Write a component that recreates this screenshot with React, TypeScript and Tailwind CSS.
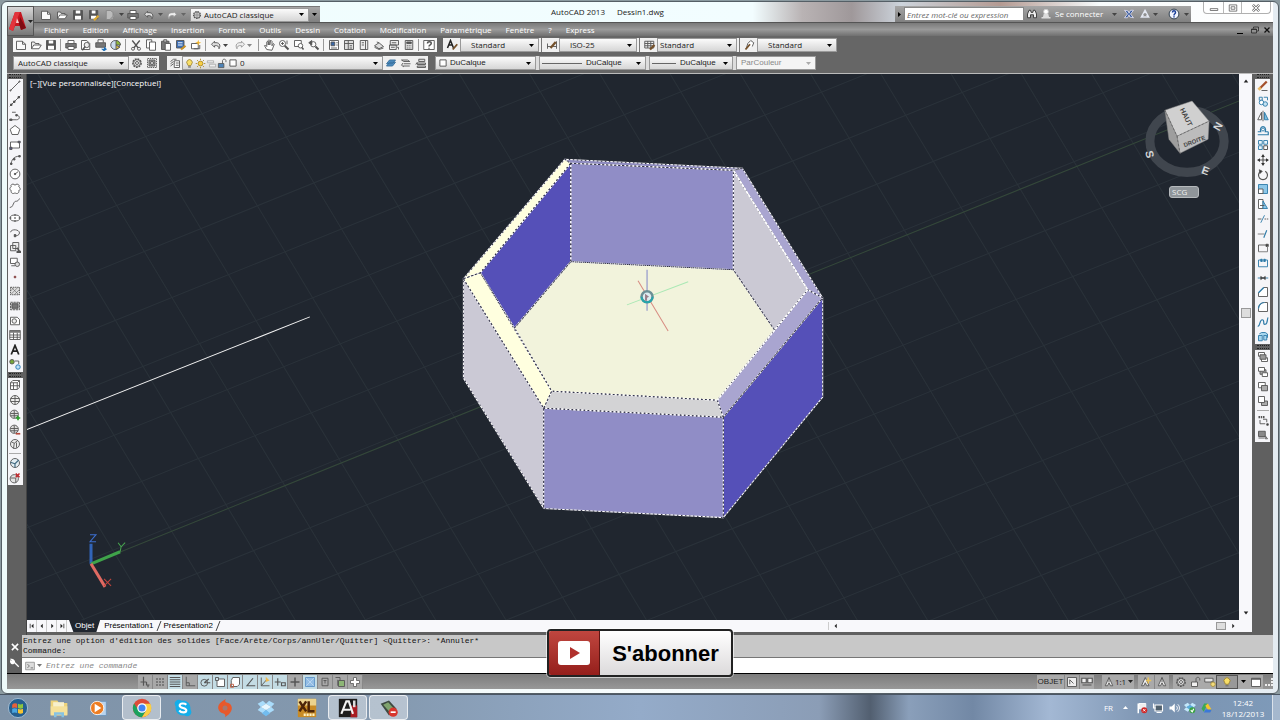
import React from "react";

const ICONS: Record<string, React.ReactNode> = {
  new: <><path d="M2 3h8l4 4v7H2z" fill="#fafafa" /><path d="M10 3v4h4" /></>,
  open: <><path d="M2 13V4h4l1 2h5v2" fill="#eee" /><path d="M2 13l3-5h10l-3 5z" fill="#fff" /></>,
  save: <><path d="M2 2h12v12H2z" fill="#555" /><path d="M5 2h6v4H5zM4 9h8v5H4z" fill="#fff" stroke="none" /></>,
  saveas: <><path d="M2 2h11v11H2z" fill="#555" /><path d="M5 2h5v4H5zM4 9h7v4H4z" fill="#fff" stroke="none" /><path d="M8 15l6-6" stroke="#d9a733" strokeWidth="3" /></>,
  etransmit: <><path d="M3 2h6l3 3v9H3z" fill="#bbb" stroke="#888" /><path d="M8 14l5-5" stroke="#999" strokeWidth="2" /></>,
  print: <><path d="M4 6V2h8v4" fill="#fff" /><path d="M1 6h14v6H1z" fill="#777" /><path d="M4 10h8v4H4z" fill="#fff" /></>,
  preview: <><path d="M2 2h7l4 4v8H2z" fill="#fff" /><circle cx="9" cy="8" r="3.500" fill="#eee" /><path d="M7 10l-4 5" strokeWidth="2" /></>,
  publish: <><path d="M4 5V1h7v4" fill="#fff" /><path d="M1 5h13v6H1z" fill="#777" /><path d="M8 13h4v-3l4 3.500-4 3z" fill="#1d6fb8" stroke="none" /></>,
  dwf: <><circle cx="7" cy="8" r="6" fill="#cde" /><path d="M8 2a6 6 0 0 1 6 6H8z" fill="#8db73a" /><path d="M8 8v6l5-3z" fill="#e2c340" /></>,
  cut: <><path d="M3 2l8 10M13 2L5 12" strokeWidth="1.800" /><circle cx="4" cy="13" r="2" /><circle cx="12" cy="13" r="2" /></>,
  copy: <><path d="M2 1h7v11H2z" fill="#fff" /><path d="M6 4h8v11H6z" fill="#fff" /></>,
  paste: <><path d="M2 3h10v11H2z" fill="#777" /><path d="M5 1h4v3H5z" fill="#ccc" /><path d="M7 6h7v9H7z" fill="#fff" /></>,
  match: <><path d="M2 2h10v10H2z" fill="#3d6fb5" /><path d="M4 5h6M4 8h6" stroke="#fff" /><path d="M8 14l6-5" stroke="#c8922a" strokeWidth="3" /></>,
  block: <><path d="M2 6h9v7H2z" fill="#fff" /><path d="M5 13h8V8" /><path d="M11 1l1 3 3 1-3 1-1 3-1-3-3-1 3-1z" fill="#f0b52e" stroke="none" /></>,
  undo: <path d="M6 3L2 7l4 4V9c4-1 6 1 6 4 3-5 0-9-6-8z" fill="#ddd" />,
  redo: <path d="M10 3l4 4-4 4V9c-4-1-6 1-6 4-3-5 0-9 6-8z" fill="#eee" stroke="#999" />,
  pan: <path d="M5 14L2 9l1-1 2 2V4l1-1 1 1v4V2l1-1 1 1v6l1-6h1l1 1v6l2-3 1 1-3 8z" fill="#fff" />,
  zoom: <><circle cx="6" cy="6" r="4" fill="#fff" /><path d="M9 9l5 5" strokeWidth="2.500" /><path d="M4 6h4M6 4v4M12 2v5" /></>,
  zoomwin: <><path d="M2 2h9v8H2z" fill="#fff" /><path d="M10 9l4 5" strokeWidth="2" /><circle cx="10" cy="9" r="3" fill="#fff" /></>,
  zoomprev: <><circle cx="7" cy="7" r="3.500" fill="#fff" /><path d="M10 10l4 4" strokeWidth="2.500" /><path d="M1 5l4-3v6z" fill="#555" /></>,
  props: <><path d="M2 2h12v12H2z" fill="#fff" /><path d="M4 4h5v5H4z" fill="#3a67a5" /><path d="M11 5h2M11 8h2M4 12h8" /></>,
  center: <><path d="M2 2h12v12H2z" fill="#ddd" /><path d="M2 6h12M7 2v12M9 9h3M9 12h3" /></>,
  palette: <><path d="M3 2h10v12H3z" fill="#eee" /><path d="M10 2v12M5 5h3M5 8h3" /></>,
  sheet: <><path d="M2 9l6-4 6 5-6 3z" fill="#ddd" /><path d="M2 11l6 3 6-2M5 4l3 1" /></>,
  markup: <><path d="M3 2h11v6H3zM2 8h9v6H2z" fill="#eee" /><path d="M5 5h6M4 11h5M12 11h2v3" /></>,
  calc: <><path d="M3 2h10v12H3z" fill="#ddd" /><path d="M5 4h6v2H5z" fill="#555" /><path d="M5 9h6M5 12h6" strokeDasharray="1.500 1" /></>,
  help: <><path d="M1 2h14v12H1z" fill="#fff" /><path d="M6 6c0-3 5-3 5 0 0 2-3 1.500-3 4M8 11.500V13" strokeWidth="2" /></>,
  textstyle: <><path d="M2 12L6 2l4 10M3.500 8h5" strokeWidth="2" stroke="#222" /><path d="M9 14l6-7" stroke="#75512b" strokeWidth="2.500" /></>,
  dimstyle: <><path d="M2 13V6M2 10h12M14 13V3" /><path d="M6 12l7-8" stroke="#75512b" strokeWidth="3" /></>,
  tablestyle: <><path d="M1 3h12v9H1zM1 6h12M5 3v9M9 3v9M1 9h12" /><path d="M8 14l6-6" stroke="#75512b" strokeWidth="3" /></>,
  leader: <><path d="M3 13l2-7 4-4 4 3-2 5" fill="#fff" /><path d="M2 14l6-7" strokeWidth="2.500" stroke="#75512b" /></>,
  gear: <><circle cx="8" cy="8" r="5.500" strokeDasharray="2.500 1.200" strokeWidth="2" /><circle cx="8" cy="8" r="4.500" fill="#eee" /><circle cx="8" cy="8" r="2" /></>,
  gearbox: <><path d="M2 2h12v12H2z" strokeDasharray="2 1" /><path d="M4 4h8v8H4z" fill="#999" /><circle cx="8" cy="8" r="2" fill="#eee" /></>,
  layers: <><path d="M2 6l4-3h4M2 9l4-3M2 12l4-3M7 5h7v9H7z" fill="#fff" /><path d="M9 8h4M9 11h4" /></>,
  layercur: <><path d="M2 9l4-5h8l-4 5zM2 12l4-5h8l-4 5z" fill="#4f90c4" stroke="#376d9a" /></>,
  layerprev: <><path d="M2 4h8l3 2H5zM5 9h9M4 12h9" fill="#ddd" /><path d="M4 8l-2 3 3 2" /></>,
  layerstate: <><path d="M5 3h8v3H5zM3 8h11v2H3zM3 12h11v2H3z" fill="#ddd" /><path d="M1 10l2-3" /></>,
  bulb: <><path d="M5 9a4 4 0 1 1 6 0l-1 2H6z" fill="#f8df68" stroke="#9b8131" /><path d="M6 12h4v2H6z" fill="#777" stroke="none" /></>,
  sun: <><circle cx="8" cy="8" r="3.500" fill="#f7cf45" stroke="#a88420" /><path d="M8 1v2M8 13v2M1 8h2M13 8h2M3 3l1.500 1.500M11.500 11.500L13 13M3 13l1.500-1.500M11.500 4.500L13 3" stroke="#a88420" /></>,
  vpfreeze: <g stroke="#aaa"><path d="M2 4h9v3H2zM5 9h9v4H5z" fill="#eee" /></g>,
  unlock: <><path d="M2 8h8v6H2z" fill="#4d83b7" /><path d="M8 8V4c0-3 5-3 5 0v2" /></>,
  unlockgray: <><path d="M2 8h8v6H2z" fill="#f2f2f2" /><path d="M8 8V4c0-3 5-3 5 0v2" /></>,
  square: <path d="M3 3h10v10H3z" fill="#fff" strokeWidth="1.500" />,
  binoc: <path d="M2 13V8l2-5h2l1 3h2l1-3h2l2 5v5h-4V9H6v4z" fill="#eee" stroke="#333" />,
  user: <><circle cx="8" cy="5" r="3.200" fill="#fff" stroke="#ccc" /><path d="M2 13h12M6 8l-1 4h6l-1-4" fill="#ddd" stroke="#ddd" strokeWidth="2" /></>,
  exchange: <><path d="M2 3l5 1 1 3 2-4h4l-4 5 4 5-5-1-1-3-2 4H2l4-5z" fill="#34589c" stroke="#dde" /></>,
  a360: <path d="M8 3L3 12h10zM8 3v4M3 12l3-3M13 12l-3-3" stroke="#e4e8f2" strokeWidth="1.800" />,
  helpround: <><circle cx="8" cy="8" r="6.500" fill="#f2f5ff" stroke="#234" /><path d="M6 6c0-3 4-3 4 0 0 2-2 1.500-2 4M8 11v1.500" stroke="#1b3f99" strokeWidth="2" /></>,
  line: <><path d="M2 14L14 2" /><circle cx="2" cy="14" r=".8" /><circle cx="14" cy="2" r=".8" /></>,
  xline: <><path d="M1 15L15 1" /><path d="M12 2h2v2h-2zM6 8h2v2H6zM2 12h2v2H2z" fill="#333" /></>,
  pline: <><path d="M4 3h5M2 13h8c5 0 5-6 0-6" /><path d="M1 12h3v2H1zM9 6h2v2H9z" fill="#555" /></>,
  polygon: <path d="M8 2l6.500 5-2.500 7H4L1.500 7z" fill="#fff" />,
  rect: <><path d="M2 4h12v8H2z" fill="#fff" /><path d="M1 11h3v3H1zM12 3h3v2h-3z" fill="#558" /></>,
  arc: <><path d="M3 14C3 8 6 3 14 3" /><path d="M2 12h2v2H2zM6 6h2v2H6zM13 2h2v2h-2z" fill="#555" /></>,
  circle: <><circle cx="8" cy="8" r="6.500" fill="#fff" /><path d="M8 8l4-3" /><circle cx="8" cy="8" r="1" fill="#333" /></>,
  cloud: <path d="M8 3c2-3 7-1 5 2 3 2 2 5 0 5 1 4-3 5-5 3-2 2-6 1-5-3-3-1-2-4 0-5-2-3 3-5 5-2z" fill="#fff" />,
  spline: <path d="M1 14c4 0 4-4 6-7s4 1 7-5" />,
  ellipse: <><ellipse cx="8" cy="8" rx="6.500" ry="4" fill="#fff" /><path d="M7 8h2M8 3v2M8 11v2M1 8h2M13 8h2" strokeWidth="2" /></>,
  ellarc: <><path d="M2 7c1-5 12-4 12 1 0 3-4 4-7 4" /><path d="M7 10h2v3H7z" fill="#555" /></>,
  insert: <><path d="M5 2h8v8H5zM2 6h7v7H2z" fill="#eee" /><path d="M11 9l3 5M11 14h4v1h-4z" strokeWidth="2" /></>,
  makeblock: <><path d="M2 3h9v7H2z" fill="#fff" /><circle cx="11" cy="11" r="3" fill="#ddd" /><path d="M3 13h5" /></>,
  point: <path d="M7 7h2v2H7z" fill="#864040" stroke="#864040" />,
  hatch: <><path d="M2 3h12v10H2z" fill="#ddd" strokeDasharray="2 1" /><path d="M2 8l5-5M2 13L12 3M7 13l7-7M3 3l10 10" strokeWidth=".7" /></>,
  gradient: <><path d="M2 3h12v10H2z" fill="#ccc" strokeDasharray="3 1" /><path d="M4 5h8v6H4z" fill="#777" /></>,
  region: <><path d="M2 3h9l3 3v7H2z" fill="#fff" /><circle cx="7" cy="8" r="3" fill="#eee" /></>,
  table: <><path d="M1 2h14v12H1z" fill="#fff" /><path d="M1 3.500h14" strokeWidth="3" stroke="#777" /><path d="M1 8h14M1 11h14M6 5v9M11 5v9" /></>,
  text: <path d="M3 14L8 2l5 12M5 9.500h6" strokeWidth="2.300" stroke="#222" />,
  addsel: <><circle cx="4" cy="5" r="3" fill="#79a83b" /><path d="M8 4h5v4" /><circle cx="12" cy="12" r="3" fill="#bfe0f5" stroke="#287bb5" /></>,
  box: <><path d="M2 5h9v9H2zM2 5l3-3h9v9l-3 3M11 5l3-3M6 5v9M2 9h12" fill="#fff" /></>,
  sphere: <><circle cx="8" cy="8" r="6" fill="#eee" /><path d="M2 6h12M2 10h12M8 2v12" /></>,
  sphereadd: <><circle cx="7" cy="7" r="5.500" fill="#ddd" /><path d="M2 6h10M2 9h10M7 2v10" /><path d="M12 9v6M9 12h6" stroke="#2a9d2a" strokeWidth="2.200" /></>,
  spheresub: <><circle cx="7" cy="7" r="5.500" fill="#ddd" /><path d="M2 6h10M2 9h10M7 2v10" /><path d="M9 13h6" stroke="#b8483b" strokeWidth="2.200" /></>,
  spherebend: <><circle cx="8" cy="8" r="6" fill="#eee" /><path d="M3 5l4 2 5-4M7 7l-1 7M10 6v7" /></>,
  cubeball: <><circle cx="8" cy="8" r="6" fill="#e3eef4" /><path d="M2 7l6 2 5-5M8 9v5" stroke="#456d84" strokeWidth="1.600" /></>,
  cubex: <><circle cx="7" cy="9" r="5.500" fill="#e4e4e4" /><path d="M2 8h7v6" /><path d="M9 2l5 5M14 2L9 7" stroke="#c2282d" strokeWidth="2" /></>,
  erase: <><path d="M4 11L13 2" stroke="#a4502c" strokeWidth="3" /><path d="M2 13l3-3" stroke="#e9b865" strokeWidth="4" /><path d="M6 14h8" /></>,
  copyobj: <g stroke="#2e7ba8"><path d="M3 3h4v4H3zM9 3h5v4" /><circle cx="6" cy="10" r="3" fill="#fff" /><circle cx="11" cy="12" r="3" fill="#c4e2f2" /></g>,
  mirror: <><path d="M6 3v10H1z" fill="#fff" /><path d="M10 3v10h5z" fill="#7bbbdc" stroke="#2e7ba8" /><path d="M8 1v14" /></>,
  offset: <g stroke="#2e7ba8"><path d="M1 9h4c-3-9 9-9 6 0h4M1 13h14V9" strokeWidth="1.600" /><circle cx="8" cy="6" r="2" /></g>,
  array: <g stroke="#2e7ba8"><path d="M2 2h5v5H2zM9 2h5v5H9zM2 9h5v5H2z" fill="#e8f5fc" /><path d="M9 9h5v5H9z" stroke="#444" fill="#fff" /></g>,
  move: <><path d="M8 2v12M2 8h12" strokeWidth="1.500" /><path d="M8 0l2.500 4h-5zM8 16l2.500-4h-5zM0 8l4-2.500v5zM16 8l-4-2.500v5z" fill="#333" stroke="none" /></>,
  rotate: <><path d="M11 3a6 6 0 1 1-6 0" strokeWidth="1.600" /><path d="M3 1l4 2-3 3z" fill="#333" /></>,
  scale: <><path d="M2 2h12v12H2z" fill="#8cc7e8" stroke="#2e7ba8" /><path d="M2 8h6v6H2z" fill="#fff" /></>,
  stretch: <><path d="M2 2h6v12H2z" fill="#fff" /><path d="M8 4l6 10H8z" fill="#8cc7e8" stroke="#2e7ba8" /><path d="M4 10h6" /></>,
  trim: <><path d="M1 8h5" /><path d="M10 8h5" strokeDasharray="2 1" /><path d="M5 13l5-10" stroke="#2e7ba8" /></>,
  extend: <><path d="M1 8h9" stroke="#777" /><path d="M9 13l4-10" stroke="#2e7ba8" strokeWidth="1.500" /></>,
  breakpt: <><path d="M2 13V4h12" /><path d="M12 3h3v3h-3z" fill="#333" /><path d="M2 13h12V5" stroke="#777" /></>,
  breakk: <g stroke="#2e7ba8"><path d="M2 4v9h12V4M2 4h4M10 4h4" /><path d="M5 3h2v3H5zM9 3h2v3H9z" fill="#2e7ba8" /></g>,
  join: <><path d="M1 8h14" stroke="#2e7ba8" /><path d="M5 6l3 2-3 2zM11 6L8 8l3 2z" fill="#333" /></>,
  chamfer: <><path d="M2 14V9l7-7h5v12z" fill="#fff" /><path d="M2 9l7-7" stroke="#2e7ba8" strokeWidth="1.600" /></>,
  fillet: <><path d="M2 14V10c0-5 4-8 8-8h4v12z" fill="#fff" /><path d="M2 10c0-5 4-8 8-8" stroke="#2e7ba8" strokeWidth="1.600" /></>,
  blend: <path d="M1 14c4-1 2-9 6-9s0 7 4 6 2-8 4-9" stroke="#2e7ba8" strokeWidth="1.600" />,
  explode: <g stroke="#2e7ba8" fill="#a6d6ee"><path d="M2 6h5v7H2zM9 6h4v6H9zM3 4l3-2h5l3 2v5" /></g>,
  order1: <><path d="M2 2h8v5H2zM6 9h8v5H6z" fill="#fff" /><path d="M4 5h8v6H4z" fill="#999" /></>,
  order2: <><path d="M4 5h8v6H4z" fill="#aaa" /><path d="M2 2h8v5H2zM7 9h7v5H7z" fill="#fff" /></>,
  order3: <><path d="M2 2h9v7H2z" fill="#fff" /><path d="M6 6h8v7H6z" fill="#aaa" /></>,
  order4: <><path d="M6 8h8v6H6z" fill="#aaa" /><path d="M2 2h8v8H2z" fill="#fff" /></>,
  textfront: <><path d="M2 4h8" strokeWidth="3" strokeDasharray="2 1" /><path d="M4 8v5h7M8 7h5v4" /><path d="M13 13h2v2h-2z" fill="#222" /></>,
  hatchback: <><path d="M2 3h9v7H2z" fill="#888" /><path d="M2 12h8M11 9l3 4h-3v-3" /></>,
  infer: <path d="M6 1v12M2 8h8M10 8v4h4M12 12v3" strokeWidth="1.600" />,
  snap: <path d="M3 4h11M3 8h11M3 12h11" strokeWidth="2" strokeDasharray="2 2" />,
  grid: <path d="M1 2h14M1 5h14M1 8h14M1 11h14M1 14h14" strokeWidth="1.400" />,
  ortho: <path d="M3 1v12h12M3 9h4v4" />,
  polar: <><circle cx="7" cy="9" r="4.500" /><path d="M7 9h8M7 9l6-5" strokeWidth="1.500" /></>,
  osnap: <><path d="M4 4h10v10H4z" fill="#fff" /><path d="M2 2h4v4H2z" fill="#c8dce4" /></>,
  osnap3d: <><path d="M5 2h9v9l-3 3H3V6z" fill="#fff" /><path d="M2 11h4v4H2z" stroke="#c25f42" /></>,
  otrack: <path d="M12 3L4 13h11" strokeWidth="1.500" />,
  ducs: <><path d="M3 2v11h11M3 13l8-9" /><path d="M9 1l5 5-5 2z" fill="#efb84e" stroke="none" /></>,
  dyn: <path d="M5 3v10M1 8h8M10 9h5v4h-5z" strokeWidth="1.500" />,
  lwt: <path d="M8 2v12M2 8h12" strokeWidth="2" />,
  transp: <><path d="M2 2h12v12H2z" fill="#93bde4" stroke="#5e93c6" /><path d="M3 3l10 10M13 3L3 13" stroke="#bdd8f0" /></>,
  qp: <path d="M4 3h8v10H4zM6 6h4M8 6v4" />,
  cycle: <><path d="M2 2h6v6M5 5v8" /><path d="M6 6h8v8H6z" fill="#8cb675" /></>,
  plus: <path d="M6 2h4v4h4v4h-4v4H6v-4H2V6h4z" fill="#fff" stroke="#666" />,
  model: <><path d="M2 2h12v12H2z" fill="#eee" /><path d="M5 11V5l5 5" /></>,
  layouts: <path d="M1 3h6v6H1zM9 3h6v6H9zM2 12h12" fill="#eee" strokeWidth="1.500" />,
  annot: <path d="M8 2v6M8 2L3 13h3l2-4 2 4h3z" fill="#f0f0f0" />,
  annot2: <><path d="M7 2L2 13h3l2-4 2 4h3z" fill="#eee" /><path d="M11 2v8M8 6h7" stroke="#e9c35b" strokeWidth="2" /></>,
  toolbarlock: <><path d="M1 3h11v5H1z" fill="#e4e4e4" /><path d="M9 8h3v3" /><circle cx="12" cy="11" r="3" fill="#f3dc7c" stroke="#a89240" /></>,
  cleanscreen: <><path d="M2 3h12v11H2z" fill="#fff" /><path d="M2 4h12" strokeWidth="2" /></>,
  minimize: <path d="M2 9h12v3H2z" fill="#fff" />,
  maximize: <><path d="M2 3h12v10H2z" fill="#fff" /><path d="M5 6h6v4H5z" /></>,
  close: <><path d="M3 3l10 10M13 3L3 13" strokeWidth="4" /><path d="M3 3l10 10M13 3L3 13" stroke="#fff" strokeWidth="1.800" /></>,
  xbold: <path d="M3 3l10 10M13 3L3 13" strokeWidth="2.500" stroke="currentColor" />,
  restore: <path d="M5 5V2h10v8h-3M1 6h10v8H1zM1 7h10" stroke="#222" strokeWidth="1.500" />,
  wrench: <path d="M6 6l8 8M2 2l2 2-1 2-2-1c0 4 3 5 5 3s1-5-3-6z" fill="#fff" stroke="#fff" strokeWidth="2" />,
  prompt: <><path d="M1 2h14v12H1z" fill="#ddd" stroke="#888" /><path d="M4 5l3 3-3 3M9 11h4" /></>,
  flag: <><path d="M3 2v13" stroke="#fff" strokeWidth="2" /><path d="M4 2h9v7H4z" fill="#eee" stroke="#fff" /><circle cx="11" cy="11" r="4" fill="#d02a2a" stroke="none" /><path d="M9.500 9.500l3 3M12.500 9.500l-3 3" stroke="#fff" /></>,
  network: <><path d="M4 4h10v8H4z" fill="#51616e" stroke="#fff" strokeWidth="1.500" /><path d="M2 2v6h3M6 14h7" stroke="#fff" strokeWidth="1.500" /></>,
  volume: <><path d="M2 6h3l4-4v12l-4-4H2z" fill="#fff" stroke="none" /><path d="M11 5c2 2 2 4 0 6M13 3c3 3 3 7 0 10" stroke="#fff" /></>,
  dropbox: <g stroke="none"><path d="M5 1l3 3-5 3-3-3zM11 1l5 3-3 3-5-3zM3 7l5 3-3 3-5-3zM13 7l3 3-5 3-3-3z" fill="#a9dcfb" /><path d="M8 4l5 3-5 3-5-3z" fill="#e8f7ff" /><path d="M4 13l4-3 4 3-4 3z" fill="#71bdf0" /></g>,
  dropcheck: <g stroke="none"><path d="M5 1l3 3-5 3-3-3zM11 1l5 3-3 3-5-3zM3 7l5 3-3 3-5-3z" fill="#c3e8fb" /><path d="M8 4l5 3-5 3-5-3z" fill="#5aaede" /><circle cx="11" cy="11" r="4" fill="#3aa346" /><path d="M9 11l2 2 2-4" stroke="#fff" strokeWidth="1.500" /></g>,
  drive: <g stroke="none"><path d="M5.500 2h5L5 13l-3-4z" fill="#3aa757" /><path d="M10.500 2L16 11h-5L7 5z" fill="#f6c42c" /><path d="M5 14l2.500-4H16l-2.500 4z" fill="#3b78d8" /></g>,
};

function Icon({ name, className = "size-3" }: { name: string; className?: string }) {
  return (
    <svg viewBox="0 0 16 16" className={`shrink-0 ${className}`} fill="none" stroke="#555" strokeWidth="1.200" aria-hidden="true">
      {ICONS[name]}
    </svg>
  );
}

function Caret({ className = "text-black" }: { className?: string }) {
  return (
    <svg viewBox="0 0 5 3" className={`h-[3px] w-[5px] shrink-0 ${className}`} aria-hidden="true">
      <path d="M0 0h5L2.500 3z" fill="currentColor" />
    </svg>
  );
}

function IconButton({ name, className = "w-[15px]", icon = "size-3" }: { name: string; className?: string; icon?: string }) {
  return (
    <button type="button" aria-label={name} className={`flex h-full shrink-0 items-center justify-center ${className}`}>
      <Icon name={name} className={icon} />
    </button>
  );
}

type ComboProps = {
  label: string;
  value: string;
  className: string;
  selectClass?: string;
  children?: React.ReactNode;
  disabled?: boolean;
};

function Combo({ label, value, className, selectClass = "pl-1", children, disabled }: ComboProps) {
  return (
    <div
      className={`flex h-3.5 shrink-0 items-center border border-[#999] pr-1 text-[8px] ${
        disabled ? "bg-[#f4f4f4] text-[#888]" : "bg-linear-to-b from-[#fbfbfb] to-[#d6d6d6] text-[#222]"
      } ${className}`}
    >
      {children}
      <select aria-label={label} disabled={disabled} className={`min-w-0 flex-1 appearance-none bg-transparent leading-3 outline-none ${selectClass}`}>
        <option>{value}</option>
      </select>
      <Caret className={disabled ? "text-[#aaa]" : "text-black"} />
    </div>
  );
}

const MENUS = ["Fichier", "Edition", "Affichage", "Insertion", "Format", "Outils", "Dessin", "Cotation", "Modification", "Paramétrique", "Fenêtre", "?", "Express"];

function Header() {
  return (
    <header className="flex h-[34px] shrink-0">
      <button type="button" aria-label="Menu de l'application" className="mt-1 flex w-[27px] shrink-0 items-center border border-[#555] bg-linear-to-b from-[#d8d8d8] to-[#777]">
        <svg viewBox="0 0 20 24" className="h-6 w-5" aria-hidden="true">
          <path d="M1 20L7 3h6l5 16-5 2-1-4H7l-2 5z" fill="#c4161f" />
          <path d="M7 3h5L8 13 5 22l-4-2z" fill="#e2343c" />
          <path d="M12 8l6 11-5 2-2-6z" fill="#7f0b12" />
          <path d="M9 9l2 5H8z" fill="#f6d0d0" />
        </svg>
        <Caret className="text-[#222]" />
      </button>
      <div className="flex min-w-0 flex-1 flex-col">
        <div className="flex h-5 shrink-0 bg-[linear-gradient(90deg,#effdfd_0%,#f2fdff_58%,#b9b3b4_62%,#9f989a_66%,#cdd4dc_70%,#b49a92_78%,#f8fcfd_86%,#ffffff_100%)]">
          <div className="mt-1 flex h-4 w-[286px] shrink-0 items-center border-t border-[#777] bg-linear-to-b from-[#a6a6a6] to-[#808080] pl-1">
            <IconButton name="new" className="w-4" />
            <IconButton name="open" className="w-4" />
            <IconButton name="save" className="w-4" />
            <IconButton name="saveas" className="w-4" />
            <IconButton name="etransmit" className="w-4" />
            <Caret className="mx-px text-[#444]" />
            <IconButton name="print" className="w-4" />
            <IconButton name="undo" className="w-4" />
            <Caret className="mx-px text-[#555]" />
            <IconButton name="redo" className="w-4" />
            <Caret className="ml-px mr-1 text-[#666]" />
            <Combo label="Espace de travail" value="AutoCAD classique" className="w-[119px] pl-px" selectClass="pl-0.5">
              <Icon name="gear" className="size-2.5" />
            </Combo>
            <Caret className="ml-[3px]" />
          </div>
          <h1 className="flex min-w-0 flex-1 items-center justify-center gap-3 whitespace-pre text-[8px] text-[#222]">
            <span>AutoCAD 2013</span>
            <span>Dessin1.dwg</span>
          </h1>
          <div className="mt-1 flex h-4 w-[296px] shrink-0 items-center bg-linear-to-b from-[#a6a6a6] to-[#808080] text-[8px] text-white">
            <svg viewBox="0 0 3 5" className="mx-[3px] h-[5px] w-[3px] shrink-0" aria-hidden="true"><path d="M0 0l3 2.500L0 5z" fill="#000" /></svg>
            <input aria-label="Recherche" placeholder="Entrez mot-clé ou expression" className="h-3.5 w-[120px] shrink-0 border border-[#888] bg-white px-0.5 italic text-black outline-none placeholder:text-[#666]" />
            <IconButton name="binoc" className="w-4" />
            <button type="button" className="flex shrink-0 items-center gap-[3px] whitespace-nowrap">
              <Icon name="user" />
              Se connecter
            </button>
            <Caret className="ml-auto mr-1 text-[#444]" />
            <IconButton name="exchange" className="w-4" />
            <IconButton name="a360" className="w-4" />
            <Caret className="text-[#444]" />
            <IconButton name="helpround" className="ml-2 w-4" />
            <Caret className="mx-0.5 text-[#444]" />
          </div>
          <div className="ml-3 mr-0.5 flex h-3 w-[68px] shrink-0 items-center divide-x divide-[#b8b8b8] rounded-b border border-t-0 border-[#b0b0b0] bg-white/60">
            <IconButton name="minimize" className="w-5" icon="size-2.5" />
            <IconButton name="maximize" className="w-[18px]" icon="size-2.5" />
            <IconButton name="close" className="flex-1" icon="size-2.5" />
          </div>
        </div>
        <nav className="flex h-3.5 items-center gap-3.5 border-t border-[#555] bg-linear-to-b from-[#7a7a7a] via-[#9a9a9a] to-[#707070] pl-2.5 text-[8px] text-white">
          {MENUS.map((m) => (
            <button key={m} type="button" className="shrink-0 leading-3">{m}</button>
          ))}
          <div className="ml-auto flex h-full items-center text-[#111]">
            <button type="button" aria-label="Réduire le dessin" className="flex h-2 w-3 items-end"><span className="h-px w-1.5 bg-black" /></button>
            <IconButton name="restore" className="w-3" icon="size-2" />
            <IconButton name="xbold" className="w-3" icon="size-2" />
          </div>
        </nav>
      </div>
    </header>
  );
}

const STANDARD_GROUPS = [
  ["new", "open", "save"],
  ["print", "preview", "publish", "dwf"],
  ["cut", "copy", "paste", "match", "block"],
];

function Rule() {
  return <span className="mx-[2px] h-3 w-px shrink-0 bg-[#999]" />;
}

function Toolbars() {
  return (
    <div className="shrink-0 border-b border-[#bbb] bg-[#666] pb-px">
      <div className="flex h-[18px] items-center pl-1.5">
        <div className="flex h-3.5 w-[424px] shrink-0 items-center bg-[#f6f6f6]">
          {STANDARD_GROUPS.map((group) => (
            <React.Fragment key={group[0]}>
              {group.map((n) => <IconButton key={n} name={n} />)}
              <Rule />
            </React.Fragment>
          ))}
          <IconButton name="undo" />
          <Caret className="mr-1 text-[#444]" />
          <IconButton name="redo" />
          <Caret className="mr-1 text-[#888]" />
          <Rule />
          {["pan", "zoom", "zoomwin", "zoomprev"].map((n) => <IconButton key={n} name={n} />)}
          <Rule />
          {["props", "center", "palette", "sheet", "markup", "calc"].map((n) => <IconButton key={n} name={n} />)}
          <Rule />
          <IconButton name="help" />
        </div>
        <div className="ml-1.5 flex h-3.5 shrink-0 items-center bg-[#f0f0f0]">
          <IconButton name="textstyle" className="w-[17px]" />
          <Combo label="Style de texte" value="Standard" className="w-[79px]" selectClass="pl-2.5" />
          <span className="mx-[2px] h-3.5 w-px bg-[#777]" />
          <IconButton name="dimstyle" />
          <Combo label="Style de cote" value="ISO-25" className="w-[78px]" selectClass="pl-2.5" />
          <span className="mx-[2px] h-3.5 w-px bg-[#777]" />
          <IconButton name="tablestyle" />
          <Combo label="Style de tableau" value="Standard" className="w-[80px]" selectClass="pl-0.5" />
          <span className="mx-[2px] h-3.5 w-px bg-[#777]" />
          <IconButton name="leader" />
          <Combo label="Style de repère" value="Standard" className="w-[80px]" selectClass="pl-2.5" />
        </div>
      </div>
      <div className="flex h-[18px] items-center pl-1.5">
        <div className="flex h-3.5 shrink-0 items-center bg-[#f0f0f0]">
          <Combo label="Espaces de travail" value="AutoCAD classique" className="w-[116px]" />
          <IconButton name="gear" />
          <IconButton name="gearbox" />
        </div>
        <div className="ml-2 flex h-3.5 shrink-0 items-center bg-[#f0f0f0]">
          <IconButton name="layers" />
          <Combo label="Calque" value="0" className="w-[201px] pl-px" selectClass="pl-0.5">
            {["bulb", "sun", "vpfreeze", "unlock"].map((n) => <Icon key={n} name={n} className="size-[11px]" />)}
            <Icon name="square" className="size-2.5" />
          </Combo>
          <IconButton name="layercur" />
          <IconButton name="layerprev" />
          <IconButton name="layerstate" />
        </div>
        <div className="ml-[7px] flex h-3.5 shrink-0 items-center gap-[3px] bg-[#ddd] font-['Liberation_Sans',Arial,sans-serif]">
          <Combo label="Couleur" value="DuCalque" className="w-[101px] pl-0.5" selectClass="pl-0.5">
            <Icon name="square" className="size-2.5" />
          </Combo>
          <Combo label="Type de ligne" value="DuCalque" className="w-[107px] pl-0.5" selectClass="pl-1">
            <span className="h-px w-10 bg-[#666]" />
          </Combo>
          <Combo label="Epaisseur de ligne" value="DuCalque" className="w-[84px] pl-0.5" selectClass="pl-1">
            <span className="h-px w-6 bg-[#666]" />
          </Combo>
          <Combo label="Style de tracé" value="ParCouleur" className="w-[80px]" disabled />
        </div>
      </div>
    </div>
  );
}

const DRAW = ["line", "xline", "pline", "polygon", "rect", "arc", "circle", "cloud", "spline", "ellipse", "ellarc", "insert", "makeblock", "point", "hatch", "gradient", "region", "table", "text", "addsel"];
const MODIFY = ["erase", "copyobj", "mirror", "offset", "array", "move", "rotate", "scale", "stretch", "trim", "extend", "breakpt", "breakk", "join", "chamfer", "fillet", "blend", "explode"];

function Grip() {
  return <div className="mb-px h-1 w-3 shrink-0 border-y border-dotted border-[#222]" />;
}

function Palette({ names, className }: { names: string[]; className: string }) {
  return (
    <div className={`mb-px flex w-[15px] shrink-0 flex-col items-center justify-around bg-[#f5f5f8] ${className}`}>
      {names.map((n) =>
        n === "-" ? (
          <span key={n} className="h-px w-3 bg-[#aaa]" />
        ) : (
          <button key={n} type="button" aria-label={n} className="flex size-3 items-center justify-center">
            <Icon name={n} />
          </button>
        ),
      )}
    </div>
  );
}

// The grid runs along both axes of the view, like the drawing plane itself
const GRID_X = Array.from({ length: 30 }, (_, i) => -450 + i * 70);
const GRID_Y = Array.from({ length: 20 }, (_, i) => 129 + i * 57);

const FACES: [string, string][] = [
  ["571,262 733,270 774,330 717,400 552,391 515,328", "#f2f3dc"],
  ["571,164 733,171 733,270 571,262", "#908dc6"],
  ["571,164 571,262 515,328 481,273", "#5550b8"],
  ["733,171 807,290 774,330 733,270", "#cbc9d4"],
  ["565,160 742,169 733,171 571,164", "#8f8cc0"],
  ["464,279 565,160 571,164 481,273", "#ffffdf"],
  ["464,279 481,273 552,391 544,408", "#ffffdf"],
  ["544,408 552,391 717,400 723,417", "#d3d3d5"],
  ["723,417 717,400 807,290 822,298", "#a9a5d0"],
  ["822,298 807,290 733,171 742,169", "#a9a5d0"],
  ["464,279 544,408 544,508 464,378", "#cbc9d5"],
  ["544,408 723,417 723,517 544,508", "#908dc6"],
  ["723,417 822,298 822,397 723,517", "#5550b8"],
];

function Viewport() {
  return (
    <div className="relative min-h-0 min-w-0 flex-1 overflow-hidden bg-[#20262f]">
      <svg viewBox="27 75 1212 544" preserveAspectRatio="xMidYMid slice" className="absolute inset-0 size-full" aria-label="Prisme hexagonal">
        <g stroke="#2a323a" strokeWidth="1">
          {GRID_X.map((x) => <path key={x} d={`M${x} 75l330 550`} />)}
          {GRID_Y.map((y) => <path key={y} d={`M27 ${y}l1212 -490`} />)}
        </g>
        <path d="M93 563L1239 101" stroke="#34483a" />
        <path d="M27 430L311 317" stroke="#f2f2f2" />
        {FACES.map(([points, fill]) => (
          <polygon key={points} points={points} fill={fill} />
        ))}
        <g fill="none" strokeLinejoin="round">
          {FACES.map(([points]) => (
            <polygon key={points} points={points} stroke="#fff" />
          ))}
          {FACES.map(([points]) => (
            <polygon key={points} points={points} stroke="#33334a" strokeDasharray="1.500 2.500" />
          ))}
          <path d="M733 171L807 290 717 400" stroke="#fff" strokeWidth="1.500" strokeDasharray="3 1" />
        </g>
        {/* crosshair and busy pointer */}
        <path d="M647 270v41" stroke="#8086c8" />
        <path d="M627 305l61-23" stroke="#a9e8b4" />
        <path d="M638 281l30 50" stroke="#d78a80" />
        <circle cx="647" cy="297" r="5.500" fill="#dcecf0" stroke="#6d8f96" strokeWidth="2.500" />
        <path d="M641.500 297a5.500 5.500 0 0 0 11 0" fill="none" stroke="#27a5ab" strokeWidth="2" />
        <path d="M645 294l4 3-2 1v3h-2z" fill="#9a7d88" />
        {/* UCS */}
        <g strokeWidth="3">
          <path d="M93 563v-20" stroke="#3164b8" />
          <path d="M93 563l29-12" stroke="#3fa34a" />
          <path d="M93 563l14 23" stroke="#e06a62" />
        </g>
        <g fill="none" strokeWidth="1">
          <path d="M92 534h6l-6 7h6" stroke="#3c6fd0" />
          <path d="M120 542l3 4 4-4M123 546l-1 5" stroke="#48a850" />
          <path d="M106 578l7 7M113 578l-7 7" stroke="#c2453e" />
        </g>
        {/* view cube */}
        <ellipse cx="1185" cy="142" rx="37" ry="31" fill="none" stroke="#40464e" strokeWidth="9" />
        <g stroke="#888" strokeWidth=".5">
          <polygon points="1163,111 1190,102 1207,122 1175,137" fill="#d0d0d0" />
          <polygon points="1175,137 1207,122 1206,140 1178,154" fill="#bcbcbc" />
          <polygon points="1163,111 1175,137 1178,154 1167,140" fill="#9e9e9e" />
          <path d="M1163 111l12 26 32-15M1175 137l3 17" fill="none" stroke="#444" strokeDasharray="2 2" />
        </g>
        <g fontFamily="Liberation Sans, sans-serif" fontWeight="700" textAnchor="middle">
          <text transform="translate(1182 119) rotate(64)" fontSize="7" fill="#444">HAUT</text>
          <text transform="translate(1193 144) rotate(-20)" fontSize="6" fill="#444">DROITE</text>
          <text transform="translate(1144 156) rotate(75)" fontSize="11" fill="#d4d6d8">S</text>
          <text transform="translate(1219 129) rotate(-60)" fontSize="11" fill="#d4d6d8">N</text>
          <text transform="translate(1202 175) rotate(20)" fontSize="11" fill="#d4d6d8">E</text>
        </g>
      </svg>
      <p className="absolute left-[3px] top-[3px] text-[8px] leading-3 text-white">[−][Vue personnalisée][Conceptuel]</p>
      <button type="button" className="absolute right-10 top-28 flex h-3 w-[30px] items-center rounded-[3px] border border-[#b5b9bc] bg-[#8f959a] pl-0.5 text-[8px] leading-none text-[#eee]">
        SCG
      </button>
    </div>
  );
}

function Arrow({ d }: { d: string }) {
  return (
    <svg viewBox="0 0 8 8" className="size-1.5 shrink-0" fill="#222" aria-hidden="true"><path d={d} /></svg>
  );
}

function TabEdge() {
  return (
    <svg viewBox="0 0 6 12" className="h-full w-1.5 shrink-0" fill="none" stroke="#444" aria-hidden="true"><path d="M5 1L1 11" /></svg>
  );
}

function Workspace() {
  return (
    <div className="flex min-h-0 flex-1 bg-[#606060]">
      <aside className="flex w-5 shrink-0 flex-col items-center border-r border-[#444] pr-[3px]">
        <Grip />
        <Palette names={DRAW} className="h-[293px]" />
        <Grip />
        <Palette names={["box", "sphere", "sphereadd", "spheresub", "spherebend", "-", "cubeball", "cubex"]} className="h-[107px]" />
      </aside>
      <div className="mb-[3px] flex min-w-0 flex-1 flex-col">
        <div className="flex min-h-0 flex-1">
          <Viewport />
          <div className="flex w-[13px] shrink-0 flex-col items-center bg-[#f8f8fb] py-1">
            <Arrow d="M1 6l3-4 3 4z" />
            <span className="mt-56 h-2.5 w-2.5 border border-[#999] bg-[#ddd]" />
            <span className="mt-auto flex"><Arrow d="M1 2l3 4 3-4z" /></span>
          </div>
        </div>
        <div className="flex h-3 shrink-0 items-center bg-[#f8f8fb] font-['Liberation_Sans',Arial,sans-serif] text-[8px] text-black">
          {["M1 1h1v6H1zM6 1v6L3 4z", "M5 1v6L2 4z", "M3 1v6l3-3z", "M2 1v6l3-3zM6 1h1v6H6z"].map((d) => (
            <button key={d} type="button" aria-label="Défiler les onglets" className="flex h-full w-2.5 items-center justify-center border-r border-[#ccc]"><Arrow d={d} /></button>
          ))}
          <button type="button" className="ml-0.5 h-full bg-[#20262f] px-1.5 leading-3 text-white [clip-path:polygon(0_0,100%_0,88%_100%,14%_100%)]">Objet</button>
          <button type="button" className="pl-1 pr-0.5 leading-3">Présentation1</button>
          <TabEdge />
          <button type="button" className="pl-0.5 pr-0.5 leading-3">Présentation2</button>
          <TabEdge />
          <div className="ml-auto flex w-[424px] items-center border-l border-[#ccc] pl-1 pr-4">
            <Arrow d="M5 1v6L2 4z" />
            <span className="ml-auto mr-1 h-2 w-2.5 border border-[#999] bg-[#ddd]" />
            <Arrow d="M3 1v6l3-3z" />
          </div>
        </div>
      </div>
      <aside className="ml-[3px] flex w-[18px] shrink-0 flex-col items-center pr-[3px]">
        <Grip />
        <Palette names={MODIFY} className="h-[265px]" />
        <Grip />
        <Palette names={["order1", "order2", "order3", "order4", "-", "textfront", "hatchback"]} className="h-[92px]" />
      </aside>
    </div>
  );
}

function CommandLine() {
  return (
    <section className="flex h-[39px] shrink-0 border-b border-black font-['Liberation_Mono',monospace] text-[8px]">
      <div className="flex w-[15px] shrink-0 flex-col items-center justify-end gap-1 bg-[#606060] pb-1 text-white">
        <button type="button" aria-label="Fermer" className="flex size-3 items-center justify-center"><Icon name="xbold" className="size-2.5" /></button>
        <button type="button" aria-label="Personnaliser" className="flex size-3 items-center justify-center"><Icon name="wrench" className="size-2.5" /></button>
      </div>
      <div className="flex min-w-0 flex-1 flex-col">
        <div className="h-[23px] overflow-hidden whitespace-nowrap border-b border-[#777] bg-[#c8c8c8] pl-px pt-px leading-[10px] text-[#111]">
          <p>Entrez une option d'édition des solides [Face/Arête/Corps/annUler/Quitter] &lt;Quitter&gt;: *Annuler*</p>
          <p>Commande:</p>
        </div>
        <div className="flex flex-1 items-center bg-white pl-[3px]">
          <Icon name="prompt" className="size-2.5" />
          <Caret className="ml-0.5 text-[#777]" />
          <input aria-label="Commande" placeholder="Entrez une commande" className="ml-1 min-w-0 flex-1 italic leading-3 outline-none placeholder:text-[#888]" />
        </div>
      </div>
    </section>
  );
}

const TOGGLES: [string, boolean][] = [
  ["infer", false], ["snap", false], ["grid", true], ["ortho", false], ["polar", true], ["osnap", true], ["osnap3d", true], ["otrack", true],
  ["ducs", true], ["dyn", true], ["lwt", false], ["transp", true], ["qp", false], ["cycle", false], ["plus", false],
];

function StatusBar() {
  return (
    <div className="flex h-[15px] shrink-0 items-center bg-linear-to-b from-[#7c7c7c] to-[#989898] pl-[131px] text-[8px] text-[#222]">
      {TOGGLES.map(([n, on]) => (
        <button
          key={n}
          type="button"
          aria-label={n}
          aria-pressed={on}
          className={`flex h-3.5 w-[15px] shrink-0 items-center justify-center border-r border-[#888] ${on ? "bg-[#c4dce4]" : "bg-[#a8a8a8]"}`}
        >
          <Icon name={n} />
        </button>
      ))}
      <div className="ml-auto flex h-3.5 shrink-0 items-center">
        <button type="button" className="h-full w-[27px] bg-[#aaa] font-['Liberation_Sans',Arial,sans-serif]">OBJET</button>
        <IconButton name="model" className="w-[15px] border-l border-[#888] bg-[#aaa]" />
        <IconButton name="layouts" className="w-[15px] border-l border-[#888] bg-[#aaa]" />
        <button type="button" className="ml-2 flex h-full w-8 items-center justify-center bg-[#aaa]">
          <Icon name="annot" />
          1:1
          <Caret className="ml-0.5" />
        </button>
        <IconButton name="annot2" className="ml-1 w-4 bg-[#aaa]" />
        <IconButton name="annot" className="w-[15px] border-l border-[#888] bg-[#aaa]" />
        <IconButton name="gear" className="ml-1 w-[15px] bg-[#aaa]" />
        <IconButton name="unlockgray" className="w-[15px] bg-[#aaa]" />
        <IconButton name="toolbarlock" className="w-[13px] bg-[#aaa]" />
        <IconButton name="bulb" className="w-[22px] border border-[#555] bg-[#999]" />
        <span className="flex h-full w-2.5 items-center justify-center bg-[#aaa]"><Caret /></span>
        <IconButton name="cleanscreen" className="w-[15px] bg-[#aaa]" />
        <span className="ml-0.5 h-2 w-2 border-b-2 border-r-2 border-dotted border-[#eee]" />
      </div>
    </div>
  );
}

function TaskButton({ label, active, className, children }: { label: string; active?: boolean; className: string; children: React.ReactNode }) {
  return (
    <button
      type="button"
      aria-label={label}
      className={`flex h-[25px] shrink-0 items-center justify-center rounded-sm ${active ? "border border-white/70 bg-white/40" : ""} ${className}`}
    >
      <svg viewBox="0 0 24 24" className="size-5" aria-hidden="true">{children}</svg>
    </button>
  );
}

function Taskbar() {
  return (
    <footer className="flex h-[26px] shrink-0 items-center border-t border-[#4a5664] bg-[linear-gradient(90deg,#7f93a8_0%,#8499af_30%,#94abc9_50%,#8b9db6_64%,#525f70_68%,#8a9fba_71%,#7288a5_76%,#a3b8d4_82%,#7b93b0_90%,#7e9ab9_100%)]">
      <TaskButton label="Démarrer" className="w-9">
        <circle cx="12" cy="12" r="11.500" fill="#265f8f" stroke="#a8c4da" />
        <path d="M5 8c2-2 4-2 6-1v5c-2-1-4-1-6 0z" fill="#e8603a" />
        <path d="M12 7c2 1 4 1 6 0v5c-2 1-4 1-6 0z" fill="#8cc63f" />
        <path d="M5 13c2-1 4-1 6 0v5c-2-1-4-1-6 0z" fill="#4aa6e0" />
        <path d="M12 13c2 1 4 1 6 0v5c-2 1-4 1-6 0z" fill="#f7c331" />
      </TaskButton>
      <TaskButton label="Explorateur" className="ml-1 w-[38px]">
        <path d="M2 3h8l2 3h10v14H2z" fill="#edd37b" />
        <path d="M5 5h13v10H5z" fill="#f7f0cd" />
        <path d="M2 10h20v11H2z" fill="#f5e19a" />
        <path d="M6 23v-6h12v6h-3v-3H9v3z" fill="#86c2e2" />
      </TaskButton>
      <TaskButton label="Lecteur Windows Media" className="ml-0.5 w-9">
        <path d="M9 4h13v17H9z" fill="#b8d4ee" stroke="#6a93bb" />
        <circle cx="11" cy="12" r="8" fill="#ed7d22" stroke="#fff" />
        <path d="M8 7v10l8-5z" fill="#fff" />
      </TaskButton>
      <TaskButton label="Chrome" active className="ml-1.5 w-[39px]">
        <circle cx="12" cy="12" r="11" fill="#dd4b39" />
        <path d="M2.500 6.500A11 11 0 0 0 12 23l5-8H8z" fill="#1ba15f" />
        <path d="M12 23A11 11 0 0 0 22 7H12l5 8z" fill="#fbd043" />
        <circle cx="12" cy="12" r="5" fill="#4285f4" stroke="#fff" strokeWidth="1.500" />
      </TaskButton>
      <TaskButton label="Skype" className="ml-0.5 w-10">
        <circle cx="12" cy="12" r="9" fill="#13aeea" />
        <circle cx="7" cy="7" r="5" fill="#13aeea" />
        <circle cx="17" cy="17" r="5" fill="#13aeea" />
        <path d="M16 8c-2-2-8-2-8 1 0 4 8 2 8 6 0 3-6 3-8.500 0" fill="none" stroke="#fff" strokeWidth="2.500" />
      </TaskButton>
      <TaskButton label="Origin" className="ml-0.5 w-10">
        <path d="M13 1c-1 2-1 3 0 4 6 1 8 5 7 9s-5 7-8 9c1-2 0-3-1-4-5-1-8-5-7-9s5-6 9-9z" fill="#e8592b" />
        <circle cx="12" cy="12" r="3" fill="#a8786e" />
      </TaskButton>
      <TaskButton label="Dropbox" className="w-[41px]">
        <g transform="translate(2 2) scale(1.250)">{ICONS.dropbox}</g>
      </TaskButton>
      <TaskButton label="XL 2012" className="w-[41px]">
        <path d="M1 1h22v22H1z" fill="#c98b25" />
        <path d="M1 1h22v8H1z" fill="#ecd38d" />
        <path d="M3 4l8 12M11 4L3 16M14 4v12h7" stroke="#4d2407" strokeWidth="3" fill="none" />
        <path d="M8 20h13" stroke="#fff1c0" strokeWidth="3" strokeDasharray="2.500 1" />
      </TaskButton>
      <TaskButton label="AutoCAD 2013" active className="ml-px w-[39px]">
        <path d="M1 1h22v22H1z" fill="#1c1c1c" />
        <path d="M16 9h7v14h-8z" fill="#a91c22" />
        <path d="M4 19L10 4h3l5 15M7 14h8" stroke="#f2f2f2" strokeWidth="2.500" fill="none" />
        <path d="M18 3h3v8h-3z" fill="#ddd" />
      </TaskButton>
      <TaskButton label="Enregistreur" active className="ml-0.5 w-[39px]">
        <path d="M2 7l10-4 9 10-9 8z" fill="#3d4a41" />
        <path d="M5 8l6-3 7 8-5 4z" fill="#7fa36d" />
        <circle cx="17" cy="17" r="5.500" fill="#d8362e" />
        <path d="M14 17h6" stroke="#fff" strokeWidth="2" />
      </TaskButton>
      <div className="ml-auto flex h-full items-center text-[8px] text-white">
        <span className="mr-2.5">FR</span>
        <svg viewBox="0 0 5 3" className="h-[3px] w-[5px]" aria-hidden="true"><path d="M0 3L2.500 0 5 3z" fill="#fff" /></svg>
        <div className="ml-2 flex gap-1">
          {["flag", "network", "volume", "dropcheck", "drive"].map((n) => <Icon key={n} name={n} />)}
        </div>
        <div className="ml-2 w-[46px] text-center leading-[11px]">
          <p>12:42</p>
          <p>18/12/2013</p>
        </div>
        <button type="button" aria-label="Afficher le bureau" className="ml-1.5 h-full w-2 border-l border-white/60 bg-white/30" />
      </div>
    </footer>
  );
}

export default function App() {
  return (
    <div className="relative flex h-screen flex-col overflow-hidden bg-[#8b9aa0] font-['Open_Sans','Noto_Sans',sans-serif]">
      <main className="mx-px mt-px flex min-h-0 flex-1 flex-col rounded-md border border-[#555f66] bg-[linear-gradient(90deg,#eefafa,#f8fcfd_60%,#e4ecf2)] px-[5px] pb-1">
        <Header />
        <Toolbars />
        <Workspace />
        <CommandLine />
        <StatusBar />
      </main>
      <Taskbar />
      <button
        type="button"
        className="absolute bottom-[43px] left-1/2 flex h-12 w-[186px] -translate-x-1/2 overflow-hidden rounded-[4px] border-2 border-[#222] bg-linear-to-b from-white to-[#dcdadb] ring-1 ring-white/60"
      >
        <span className="flex h-full w-[51px] items-center justify-center border-r border-[#5e1512] bg-linear-to-b from-[#c0463f] to-[#951e1b]">
          <svg viewBox="0 0 32 24" className="h-6 w-8" aria-hidden="true">
            <rect width="32" height="24" rx="3" fill="#fff" />
            <path d="M12 6v12l10-6z" fill="#b0302c" />
          </svg>
        </span>
        <span className="flex h-full flex-1 items-center justify-center font-['Liberation_Sans',Arial,sans-serif] text-[22px] font-bold text-black">S'abonner</span>
      </button>
    </div>
  );
}
